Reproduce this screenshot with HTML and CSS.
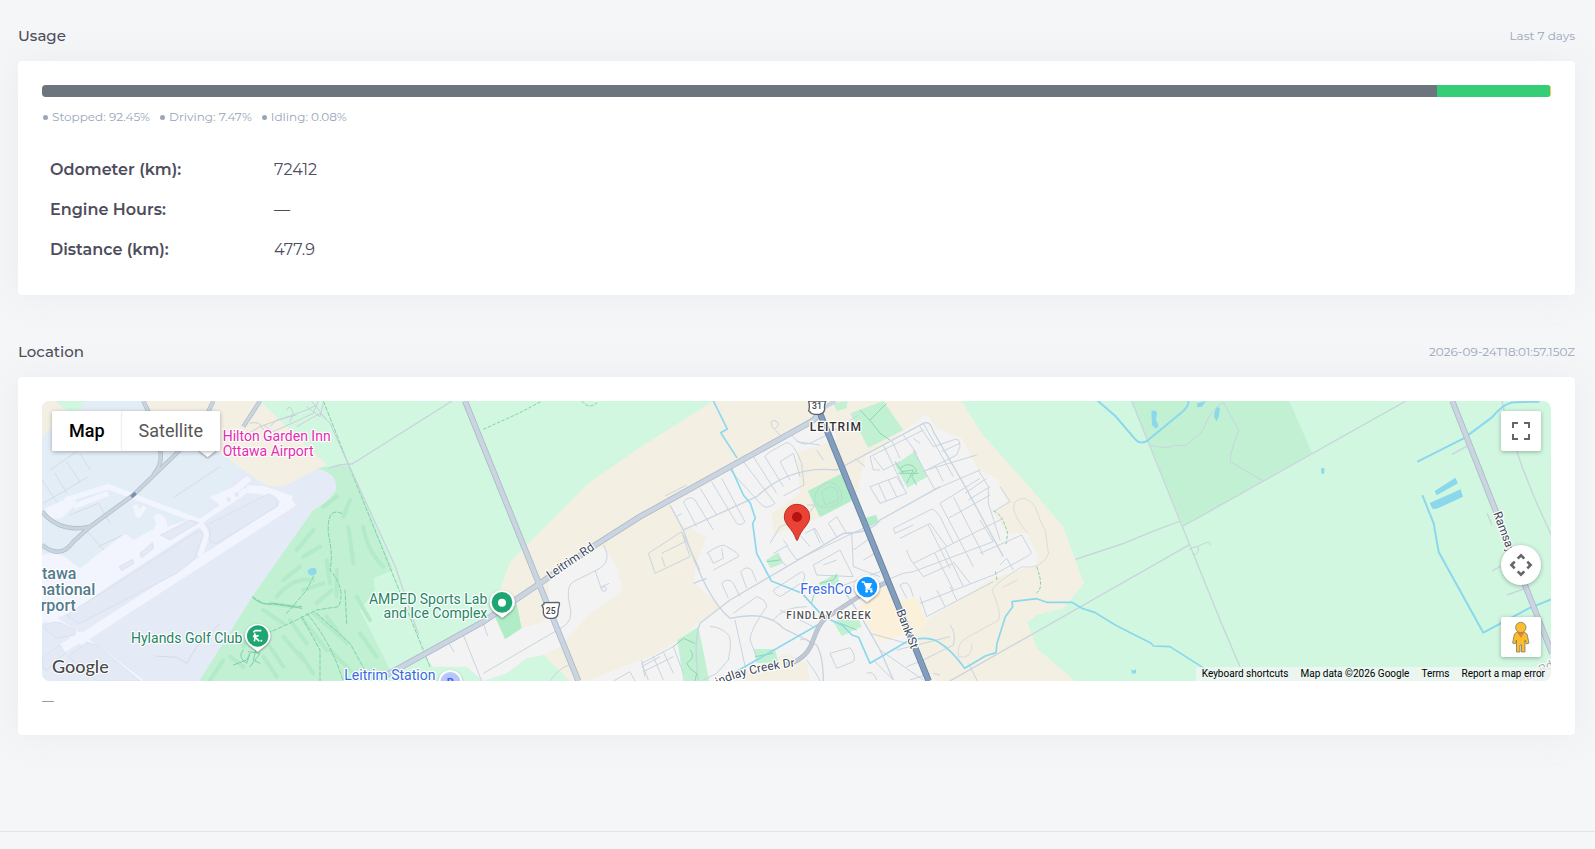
FILE: index.html
```html
<!DOCTYPE html>
<html lang="en">
<head>
<meta charset="utf-8">
<title>Vehicle usage and location</title>
<link rel="stylesheet" href="styles.css">
</head>
<body>
<main class="page">
  <section class="section">
    <header class="section-head">
      <h2 class="section-title">Usage</h2>
      <span class="section-note">Last 7 days</span>
    </header>
    <div class="card">
      <div class="usage-bar" role="img" aria-label="Usage breakdown">
        <div class="bar-stopped" style="width:92.45%"></div>
        <div class="bar-driving" style="width:7.47%"></div>
        <div class="bar-idling" style="width:0.08%"></div>
      </div>
      <ul class="legend">
        <li>Stopped: 92.45%</li>
        <li>Driving: 7.47%</li>
        <li>Idling: 0.08%</li>
      </ul>
      <table class="stats">
        <tbody>
          <tr><th scope="row">Odometer (km):</th><td>72412</td></tr>
          <tr><th scope="row">Engine Hours:</th><td>—</td></tr>
          <tr><th scope="row">Distance (km):</th><td>477.9</td></tr>
        </tbody>
      </table>
    </div>
  </section>

  <section class="section">
    <header class="section-head">
      <h2 class="section-title">Location</h2>
      <span class="section-note">2026-09-24T18:01:57.150Z</span>
    </header>
    <div class="card">
      <div class="map">
        <svg class="map-canvas" viewBox="0 33 4527 840" preserveAspectRatio="xMidYMid slice" role="img" aria-label="Map">
          <rect x="-600" y="-200" width="5800" height="1300" fill="#d1f7e1"/>

          <!-- land areas -->
          <path fill="#f3efe3" d="M1374 600L1404 515 1464 455 1639 280 1794 172 2014 33H2759L2819 130 2939 265 3064 410 3126 580 3064 655 2984 675 2956 697 2984 775 3099 873H1584L1504 795 1330 720z"/>
          <g transform="translate(-36)">
            <path fill="#e4eaf6" d="M36 33H340L380 120 570 180 690 275Q740 305 790 275L860 237Q915 230 920 290 900 340 850 360L667 620 508 873H36z"/>
            <path fill="#e3edf6" d="M36 33H340L380 120 570 180 640 240 480 400 330 520 100 590 36 500z"/>
            <path fill="#f3efe3" d="M330 33H690L890 225 860 237 790 275Q740 305 690 275L570 190 560 130 400 110zM36 33H75L120 70 36 140zM36 500L70 530 36 535z"/>
            <path fill="#d1f7e1" d="M75 33H168L130 75z"/>
            <path fill="#c1f0d3" d="M508 873L667 620 850 360Q900 335 918 300 925 250 860 235 920 225 960 228L1090 540 1030 565 1035 600 990 660 1080 840 1065 873z"/>
          </g>
          <g transform="translate(894)">
            <path fill="#f4f3f4" d="M255 800L465 680 495 745 545 715 600 700 630 680 625 570 790 470 825 520 850 600 740 680 660 770 610 795 560 805 500 850 430 873 380 830 280 830zM740 873L900 810 960 790V873z"/>
            <path fill="#b0edc7" d="M465 680L530 640 545 715 495 748z"/>
          </g>
          <g transform="translate(1794)">
            <path fill="#f4f3f4" d="M90 345L500 110 560 80 620 200 700 190 860 72 890 115 965 145 1015 240 1070 265 1102 335 1060 365 1100 430 1160 430 1195 500 1190 525 1060 565 860 690 800 760 890 873H0V820L115 750 175 700 240 650 160 575 170 520 200 440 120 400z"/>
            <path fill="#f3efe3" d="M470 190L600 145 680 190 650 310 500 300 545 380 400 435 395 370 480 310zM240 873L340 835 440 790 500 820 510 873z"/>
            <path fill="#fbf0da" d="M650 655L735 590 770 630 830 625 862 700 840 720 720 757z"/>
            <path fill="#b5edcb" d="M503 303L606 250 640 330 540 382zM674 385L708 374 716 395 688 410z"/>
            <path fill="#c1f0d3" d="M580 40L622 33 620 55 590 63zM630 70L730 33 790 120 685 173zM765 225L825 183 862 260 802 293zM378 510L415 487 430 520 392 534zM535 580L592 550 600 590 550 600zM580 695L650 670 665 710 605 738zM112 750L175 710 208 873H130zM340 777H405L415 815 350 820z"/>
          </g>
          <path fill="#c1f0d3" d="M3269 33H3742L3810 188 3424 408z"/>

          <!-- airport -->
          <g transform="translate(-36)" fill="none" stroke-linejoin="round">
            <g stroke="#d3dbe8" stroke-width="3">
              <path d="M60 240L140 185M40 340L175 260M75 250L110 310M110 215L150 275M150 190L180 240M120 375L205 340 240 400M160 410L230 490M205 470L290 430M430 323L570 230M375 798L440 802 470 820 500 770 570 700M36 270L80 335"/>
            </g>
            <path fill="#f2f4fe" d="M36 495Q80 480 110 505L150 535 285 430 310 450 370 418 378 400 370 380 385 370 408 385 412 410 455 395 500 385 525 400 250 580 120 670 36 700zM45 355L130 318 140 340 95 385 60 388zM540 322L610 290 650 258 665 270 620 310 575 350z"/>
            <g stroke="#f2f4fe">
              <path stroke-width="28" d="M160 742L790 335M36 670L150 745 330 880M36 815L160 735"/>
              <path stroke-width="16" d="M105 330L235 290 510 395 650 300M500 395Q540 425 525 450L510 500M650 292L740 318Q770 330 750 350M235 310L130 350M315 345L325 375 345 350"/>
              <path stroke-width="24" d="M655 298L700 300 785 330"/>
            </g>
            <g fill="#e3eaf5" stroke="#d5ddeb" stroke-width="2">
              <path d="M95 700Q60 690 40 712L80 745 135 735 135 720zM110 675L300 555 500 425Q522 420 518 440L490 510 440 550 145 702zM540 400L715 312Q750 320 740 350L560 460Q535 460 538 440 545 420 530 405zM330 490L368 458 370 475 335 503zM268 530L308 508 312 520 275 542zM392 435L480 390 505 398 420 450zM36 800L90 765 105 790 50 840 36 830zM115 800L170 757 200 765 330 873H200z"/>
            </g>
            <g fill="#e3eaf5"><circle cx="596" cy="329" r="7"/><circle cx="620" cy="314" r="7"/></g>
            <g stroke="#aebbc9" stroke-width="13"><path d="M340 33L360 75M550 33L525 85M690 33L640 110 M450 180L310 315 180 410 130 455Q90 510 36 465M36 365Q90 430 180 410M390 180Q400 220 370 255"/></g>
            <g stroke="#c9d4df" stroke-width="9"><path d="M340 33L360 75M550 33L525 85M690 33L640 110 M450 180L310 315 180 410 130 455Q90 510 36 465M36 365Q90 430 180 410M390 180Q400 220 370 255"/></g>
            <path stroke="#7791b1" stroke-width="10" d="M304 321L317 309"/>
            <g stroke="#c9cfda" stroke-width="3"><path d="M640 140L690 110 830 60 860 45M700 105L730 125 850 70M770 60Q780 40 790 70L780 95M800 110L870 70 900 100 958 230M830 50L870 80 880 40M660 100Q690 90 700 120M845 33L890 90M865 33L850 70M720 110L740 90 800 75"/></g>
          </g>

          <!-- golf course -->
          <g transform="translate(-36)" fill="none" stroke-linecap="round">
            <path stroke="#b3eac7" stroke-width="12" d="M880 350L920 320M800 480L850 420M820 500L870 470M760 570L810 530M740 620Q790 560 850 570M820 600L880 580M860 640L905 600M890 510L900 580M920 540V620M955 410L970 520M960 330L940 380M1000 410Q1010 480 1060 530M980 620L1020 690M700 660L760 700M720 640L790 650M780 690L830 760M820 690L890 780M850 670L930 740M890 680L950 760M760 740L820 810M720 770L760 830M650 740L640 770M600 800L640 830M540 870L580 810M700 800L740 860M810 790L850 850M900 780L980 860M990 730L1040 800"/>
            <g stroke="#7fd0aa" stroke-width="3" stroke-dasharray="12 6">
              <path d="M880 33L950 210 1200 830M935 370Q890 350 895 430 910 500 900 540 950 600 925 650L860 660 800 690 690 740M770 670L830 600 855 550M667 620L700 640 815 650M830 670Q900 750 940 873M860 670L960 760 1010 850M945 600L950 700M815 680L870 780 870 873"/>
            </g>
            <path stroke="#7fcfae" stroke-width="3" d="M670 625Q700 650 730 640L815 655M640 780Q620 800 650 820L660 790 650 810 610 825M680 770L670 810 690 820M655 785L690 790 660 830"/>
            <path fill="#8fd9ee" d="M832 545Q838 532 855 533 865 545 855 554 840 562 832 545z"/>
          </g>

          <!-- thin lines over parkland -->
          <g fill="none" stroke="#c9d4dc" stroke-width="4">
            <path d="M860 235Q890 222 930 222L1230 33M900 180L1060 530 1130 735"/>
            <path d="M3269 33L3534 690 3594 830M3424 408L4092 33M2694 890L3444 463M3100 508L3240 462 3330 425 3415 393M4380 33L4390 80 4440 230 4480 330 4530 440M4230 193L4290 160M4335 370L4350 405M4350 543L4400 515M4395 615L4450 595"/>
            <path stroke-width="3" d="M3326 165Q3380 180 3400 165L3430 168 3480 125Q3510 50 3545 38L3590 120Q3560 200 3565 215L3662 272M3440 480Q3470 460 3470 480 3465 500 3450 490M3465 470L3500 455 3506 465M2780 820L2806 873"/>
            <path stroke="#dbdcdc" stroke-width="3" d="M2957 430Q2900 360 2920 335 2950 310 2980 350 3000 410 3010 420 3020 500 3020 490 3000 540 2940 530 2860 580 2850 600 2880 670 2870 690L2780 740Q2740 760 2750 800 2790 810 2790 760M2880 593L2925 570"/>
          </g>
          <g fill="none" stroke="#84cfa7" stroke-width="3" stroke-dasharray="10 5">
            <path d="M1324 118L1430 70 1500 33M1620 33Q1640 60 1665 38M2854 363Q2880 370 2897 430L2892 463M2984 530Q3010 600 2978 612M2860 545L2866 575"/>
          </g>

          <!-- local streets, west -->
          <g transform="translate(894)" fill="none" stroke="#c8d5df" stroke-width="3">
            <path d="M790 465Q820 515 770 540L700 575Q675 590 690 650 700 690 670 710L430 850M765 540L785 600M785 590L808 580M370 735L425 873M430 700L443 738M325 755L342 787M630 873Q660 830 690 825M820 873L870 845 885 873M905 810L915 860M905 830L960 800"/>
            <circle cx="792" cy="597" r="7"/>
          </g>

          <!-- local streets, village -->
          <g transform="translate(1794)" fill="none" stroke="#c8d5df" stroke-width="3" stroke-linejoin="round">
            <path stroke-width="4" d="M90 345L130 420Q200 630 270 685 380 660 430 715L530 765Q550 800 550 873M130 420L350 320Q450 225 590 240L850 100Q870 90 880 125L970 280 1090 500M175 873Q160 750 180 700L270 630 610 430Q690 430 720 390L900 290M160 580L200 565M610 600Q660 670 720 780L760 870"/>
            <path d="M130 335Q150 315 165 330L220 420M130 335L170 410M180 295L230 375M215 275L290 400Q300 410 315 395L245 265M270 240L365 345Q380 360 405 340L310 215M340 200L410 310M375 200Q370 195 440 158 460 155 485 220L492 285 430 318M375 200L430 290M420 215L460 190 480 260M420 215L450 270M75 318L140 285M110 380L125 370"/>
            <path d="M395 105Q390 90 405 92 420 98 412 110 400 125 395 105zM405 120L425 140M455 135Q480 170 510 160L570 130 655 75M470 155L540 165M530 180L550 210M645 205L675 230"/>
            <path d="M25 490L45 550 150 500 125 425 25 490M65 500L75 530M65 490L135 455M200 490Q250 455 260 470 300 490 295 500L220 540M205 490L220 520 250 505 245 475M130 435L180 540M245 580Q265 560 280 580L300 620M245 580L265 625M302 545Q320 525 335 540L350 575M302 545L320 595"/>
            <path d="M400 490L440 468 470 510M415 500L440 530M470 510L700 400M480 435L510 470M495 430L525 415 550 460M520 415L540 460M565 400L590 380 620 430M565 400L590 440M430 450L445 470M390 460L420 410 500 380 525 345 500 345"/>
            <path d="M400 600L485 545Q500 550 490 575L420 620Q400 610 400 600zM520 525L600 480 640 560 530 555 520 525M550 525L590 510M635 430L640 530 720 560M640 480L690 445M670 510L705 490M600 590L720 545M280 670L350 620Q380 630 380 650 330 720 330 750L350 800M190 870L230 850 265 810Q280 740 260 730 240 710 210 710M285 690L320 850M400 690Q430 650 500 650M420 660L520 710"/>
            <path d="M5 820L100 770 130 850M5 820L25 870M40 800L70 870M70 785L100 850M10 845L100 800M500 810Q530 850 540 873M570 790L630 773Q650 800 640 815L590 835zM480 750Q500 740 510 760M700 810L760 870M680 850Q700 840 710 870M690 730L800 760M720 780L850 870M780 585Q800 570 810 590L820 620M780 585L800 625"/>
            <path d="M690 200L850 120M700 200L730 240 780 215M690 200L700 240 720 240M730 165L790 290M790 135L830 190M755 150L780 205M820 145L840 160M690 290L770 260 800 310 720 340 690 290M715 280L740 335M745 270L770 320M820 180L885 300M850 100L940 260M840 110L880 170 940 150Q960 140 960 170L950 195 850 245M905 185L960 160M860 240L1010 195M885 225L910 275M880 300L1020 240M975 310L1040 265M985 330L1050 290"/>
            <path d="M900 340L1000 530M940 320L1030 495M900 340L1020 265M925 385L1050 315M760 415L870 360Q880 350 900 380L940 460M760 415L765 430 820 405M800 480Q810 510 820 520L1090 385M820 520L850 560 940 520M740 570L790 550 820 545 1060 455M885 490L940 600M915 475L970 590M865 405L930 535M940 515L990 580M840 640L1060 555 1160 500Q1180 490 1170 480L1145 435 1020 490M860 680L1060 575M1080 525L1100 505 1120 540M1020 390L1060 455M1080 290L1110 335 1060 365M1015 240L1045 290V340L1080 450M840 620L860 680M890 600L915 650M930 590L950 630M780 445L870 400 920 470"/>
            <path d="M770 780L930 740M800 830L850 810M810 870L870 850M850 810L940 765Q950 730 930 705M880 850L900 855"/>
          </g>
          <g transform="translate(1794)" fill="none" stroke="#8fd6b0" stroke-width="3">
            <path d="M780 235Q810 210 830 240L815 260 830 285M785 245L820 240 800 280M775 250L835 250M765 215L790 250M660 60Q700 100 720 130L750 150M690 90L740 40M100 770L130 745 165 760M150 780Q170 800 140 820 150 840 170 850L165 873M600 700L650 720M345 800L400 790M380 515L420 510M540 580L580 570 590 555M515 640Q520 600 550 590"/>
            <g stroke="#b4dccb"><path d="M525 320Q530 285 570 275 610 290 605 330 580 360 540 350 520 340 525 320zM545 305Q570 280 590 300L595 330 555 345z"/></g>
          </g>

          <!-- water -->
          <g fill="none" stroke="#8bd8ed" stroke-width="6" stroke-linejoin="round" stroke-linecap="round">
            <path stroke-width="5" d="M2014 33L2056 117 2036 128 2084 202M2068 235L2104 315 2125 340 2140 385 2132 400 2144 490 2188 573 2280 610 2344 680 2400 705 2430 735 2450 742 2484 820 2594 755Q2650 735 2688 755 2730 780 2768 835L2830 798 2862 788 2865 760 2890 680 2912 650 2910 635 2984 626 3014 637H3090L3120 655 3160 668 3220 705 3265 728 3325 758 3335 768 3384 770 3510 850M2074 850L2344 695"/>
            <path d="M3168 33L3220 78 3280 148Q3294 164 3315 153L3425 62Q3438 50 3440 33M4128 214L4265 145 4350 82Q4390 35 4420 37L4490 35M4142 318L4175 400 4190 486 4324 728 4460 655 4527 628"/>
          </g>
          <g fill="#8bd8ed"><path d="M3328 65Q3340 55 3345 70L3342 90 3350 108 3342 116 3330 105zM3465 40L3492 33 3480 50 3466 52zM3518 65Q3526 45 3534 55L3530 80 3524 94 3516 80zM3837 235H3848L3846 252 3838 250zM4178 303L4240 263 4248 280 4184 316zM4163 339L4256 298 4263 320 4190 354Q4175 360 4170 355zM3268 838L3274 842 3282 838 3282 850 3270 851z"/></g>

          <!-- main roads -->
          <g fill="none">
            <g stroke="#adbac8"><path stroke-width="18" d="M1034 855L1324 695 1494 580 1660 465 1794 380 2290 105Q2330 85 2334 60M1269 33L1609 873M4231 33L4530 790"/><path stroke-width="14" d="M2230 825Q2290 810 2310 760 2330 700 2350 685L2450 620 2536 575"/></g>
            <g stroke="#cbd5e1"><path stroke-width="13" d="M1034 855L1324 695 1494 580 1660 465 1794 380 2290 105Q2330 85 2334 60L2380 33M1269 33L1609 873M4231 33L4530 790"/><path stroke="#c0c8d4" stroke-width="10" d="M2230 825Q2290 810 2310 760 2330 700 2350 685L2450 620 2536 575"/></g>
            <path stroke="#66809f" stroke-width="19" d="M2330 60L2660 873"/>
            <path stroke="#829dbd" stroke-width="14" d="M2330 60L2660 873"/>
          </g>

          <!-- route shields -->
          <g fill="#fff" stroke="#59616b" stroke-width="4">
            <path d="M1506 642Q1504 637 1512 638L1548 637Q1554 637 1552 644 1548 656 1548 670 1546 684 1532 685H1520Q1506 683 1504 668 1506 654 1500 646z"/>
            <path d="M2300 33Q2304 52 2300 62 2306 72 2318 73H2332Q2346 70 2348 58 2346 46 2351 33z"/>
          </g>
          <g class="shield-text"><text x="1526" y="671">25</text><text x="2325" y="58">31</text></g>

          <!-- place pins -->
          <g fill="#fff" class="poi-shadow">
            <path d="M647 702A36 36 0 0 1 672 766L647 785 622 766A36 36 0 0 1 647 702z"/>
            <path d="M1380 601A36 36 0 0 1 1405 665L1381 684 1356 665A36 36 0 0 1 1380 601z"/>
            <path d="M2475 555A36 36 0 0 1 2500 618L2475 637 2450 618A36 36 0 0 1 2475 555z"/>
            <path d="M496 135A36 36 0 0 1 520 184L497 202 473 184A36 36 0 0 1 496 135z"/>
            <circle cx="1225" cy="876" r="36"/>
          </g>
          <circle cx="497" cy="155" r="22" fill="#ef62bd"/>
          <circle cx="647" cy="738" r="32" fill="#1ea672"/>
          <g fill="none" stroke="#fff" stroke-width="5"><path d="M634 727L640 722H658M640 730L636 739 650 737M640 738L637 754M641 743L652 754"/></g><circle cx="658" cy="752" r="3" fill="#fff"/>
          <circle cx="1380" cy="637" r="31" fill="#1ea672"/><circle cx="1380" cy="638" r="12" fill="#fff"/>
          <circle cx="2475" cy="591" r="31" fill="#1396ff"/>
          <path fill="none" stroke="#fff" stroke-width="4" d="M2459 576H2466L2475 597H2491M2475 597H2470"/><path fill="#fff" d="M2467 579H2490L2484 594H2474z"/><circle cx="2474" cy="604" r="4" fill="#fff"/><circle cx="2488" cy="604" r="4" fill="#fff"/>
          <circle cx="1225" cy="876" r="30" fill="#b4c8fb"/>
          <text x="1214" y="887" class="transit-mark">P</text>

          <!-- labels -->
          <g class="label">
            <g class="pink"><text x="542" y="154">Hilton Garden Inn</text><text x="542" y="197">Ottawa Airport</text></g>
            <g class="teal"><text x="0" y="566">tawa</text><text x="-13" y="614">national</text><text x="-4" y="662">rport</text></g>
            <g class="green"><text x="267" y="760">Hylands Golf Club</text><text x="1336" y="641" text-anchor="end">AMPED Sports Lab</text><text x="1336" y="683" text-anchor="end">and Ice Complex</text></g>
            <g class="blue"><text x="907" y="871">Leitrim Station</text><text x="2275" y="613">FreshCo</text></g>
            <text class="town" x="2303" y="124">LEITRIM</text>
            <text class="hamlet" x="2233" y="688">FINDLAY CREEK</text>
            <g class="road">
              <text transform="translate(1524 568) rotate(-34)">Leitrim Rd</text>
              <text transform="translate(2563 664) rotate(69)">Bank St</text>
              <text transform="translate(4354 370) rotate(70)">Ramsay</text>
              <path id="creek-drive" d="M2028 888Q2110 845 2290 826" fill="none" stroke="none"/>
              <text><textPath href="#creek-drive">indlay Creek Dr</textPath></text>
              <text class="faded" transform="translate(4438 882) rotate(-27)">eau Rd</text>
            </g>
          </g>

          <!-- vehicle marker -->
          <path fill="#ea4335" stroke="#b93126" stroke-width="3" d="M2265 343C2242 343 2227 361 2227 381 2227 405 2252 415 2262 447Q2265 456 2268 447C2278 415 2303 405 2303 381 2303 361 2288 343 2265 343z"/>
          <circle cx="2265" cy="381" r="15" fill="#b31412"/>
          <text class="logo" x="30" y="850">Google</text>
        </svg>

        <div class="map-type">
          <button type="button" class="type-button active">Map</button>
          <button type="button" class="type-button">Satellite</button>
        </div>
        <button type="button" class="map-control fullscreen" aria-label="Toggle fullscreen view">
          <svg width="18" height="18" viewBox="0 0 18 18" fill="none" stroke="#666" stroke-width="2"><path d="M1 6V1H6M12 1H17V6M17 12V17H12M6 17H1V12"/></svg>
        </button>
        <div class="side-controls">
          <button type="button" class="map-control camera" aria-label="Map camera controls">
            <svg width="24" height="24" viewBox="0 0 24 24" fill="none" stroke="#666" stroke-width="2.600"><path d="M8.700 5.700L12 2.400 15.300 5.700M8.700 18.300L12 21.600 15.300 18.300M5.700 8.700L2.400 12 5.700 15.300M18.300 8.700L21.600 12 18.300 15.300"/></svg>
          </button>
          <button type="button" class="map-control" aria-label="Drag Pegman onto the map to open Street View">
            <svg width="18" height="32" viewBox="0 0 18 32" fill="#fbbc2d" stroke="#7d7a63" stroke-width=".8"><path d="M5 11H12L15 13 17 22 14.500 23 13 19V31H9.500V24H8V31H4.500V19L3 23 .600 22 2.500 13z"/><path d="M5.500 12H12L9 17z" fill="#e8823a" stroke="none"/><circle cx="8.800" cy="6.500" r="5.200"/></svg>
          </button>
        </div>
        <div class="attribution">
          <button type="button" class="credit">Keyboard shortcuts</button>
          <span class="credit">Map data ©2026 Google</span>
          <a class="credit" href="#terms">Terms</a>
          <a class="credit" href="#report">Report a map error</a>
        </div>
      </div>
      <p class="address">—</p>
    </div>
  </section>
</main>
<footer class="footer"></footer>
</body>
</html>
```
FILE: styles.css
```css
* { box-sizing: border-box; }
body {
  margin: 0;
  background: #f5f6f8;
  color: #4d4d5c;
  font-family: Montserrat, Inter, "Liberation Sans", sans-serif;
  font-size: 16px;
  line-height: 24px;
  overflow: hidden;
}
.page { padding: 24px 20px 0 18px; }
.section + .section { margin-top: 45px; }
.section-head {
  display: flex;
  justify-content: space-between;
  align-items: center;
  margin-bottom: 13px;
}
.section-title { margin: 0; font-size: 15px; font-weight: 500; }
.section-note { color: #98a6ba; font-size: 12px; line-height: 22px; }
.card {
  padding: 24px;
  background: #fff;
  border-radius: 4px;
  box-shadow: 0 0 35px rgba(154, 161, 171, .12);
}
.usage-bar {
  display: flex;
  height: 12px;
  border-radius: 4px;
  overflow: hidden;
  background: #ffc35a;
}
.bar-stopped { background: #6c757d; }
.bar-driving { background: #35ce76; }
.bar-idling { background: #ffc35a; }
.legend {
  display: flex;
  gap: 9px;
  margin: 8px 0 21px;
  padding: 0;
  list-style: none;
  color: #98a6ba;
  font-size: 12px;
}
.legend li { display: flex; align-items: center; gap: 4px; }
.legend li::before {
  content: "";
  width: 5px;
  height: 5px;
  margin-left: 1px;
  border-radius: 50%;
  background: #98a6ba;
}
.stats { width: 100%; margin-bottom: 25px; border-collapse: collapse; }
.stats:last-child { margin-bottom: 1px; }
.stats th, .stats td { padding: 8px; text-align: left; }
.stats th { width: 224px; font-weight: 600; }
.stats td { font-weight: 400; }

.map {
  position: relative;
  height: 280px;
  border-radius: 8px;
  overflow: hidden;
  font-family: Roboto, sans-serif;
}
.map-canvas { display: block; width: 100%; height: 100%; }
.map button { margin: 0; border: 0; font-family: inherit; cursor: pointer; }
.map-type {
  position: absolute;
  top: 10px;
  left: 10px;
  display: flex;
  background: #fff;
  border-radius: 2px;
  box-shadow: 0 1px 4px rgba(0, 0, 0, .3);
}
.map-type .type-button {
  height: 40px;
  padding: 0 17px 2px;
  background: #fff;
  color: #565656;
  font-size: 18px;
  border-radius: 2px;
}
.map-type .type-button + .type-button { box-shadow: -1px 0 1px rgba(0, 0, 0, .08); }
.map-type .active { color: #000; font-weight: 500; }
.map-control {
  display: flex;
  align-items: center;
  justify-content: center;
  width: 40px;
  height: 40px;
  padding: 0;
  background: #fff;
  border-radius: 2px;
  box-shadow: 0 1px 4px rgba(0, 0, 0, .3);
}
.fullscreen { position: absolute; top: 10px; right: 10px; }
.side-controls {
  position: absolute;
  right: 10px;
  bottom: 24px;
  display: flex;
  flex-direction: column;
  gap: 32px;
}
.camera { border-radius: 50%; }
.attribution {
  position: absolute;
  right: 0;
  bottom: 0;
  display: flex;
}
.attribution .credit {
  height: 14px;
  padding: 0 6px;
  background: rgba(245, 245, 245, .7);
  color: #000;
  font-size: 10px;
  line-height: 14px;
  text-decoration: none;
}

.label text { paint-order: stroke; stroke: #fff; stroke-width: 7px; stroke-linejoin: round; font-size: 42px; }
.label .pink { fill: #e52bb0; }
.label .teal { fill: #547b8b; }
.label .teal text { font-size: 48px; font-weight: 500; }
.label .green { fill: #258564; }
.label .blue { fill: #3a6be0; }
.label .town { fill: #333; font-size: 36px; font-weight: 500; letter-spacing: 3px; }
.label .hamlet { fill: #555; font-size: 30px; font-weight: 500; letter-spacing: 3px; }
.label .road text { fill: #3c4858; font-size: 36px; }
.label .road .faded { fill: #a5b0ac; }
.shield-text { fill: #444; font-size: 26px; font-weight: 500; text-anchor: middle; }
.transit-mark { fill: #4a5af5; font-size: 32px; font-weight: 700; }
.poi-shadow { filter: drop-shadow(0 3px 3px rgba(0, 0, 0, .4)); }
.logo {
  fill: #4a4a4a;
  stroke: #fff;
  stroke-width: 6px;
  paint-order: stroke;
  font-family: Lato, sans-serif;
  font-size: 54px;
  font-weight: 500;
}
.address { margin: 9px 0 0; font-size: 12px; line-height: 21px; }
.footer { margin-top: 96px; border-top: 1px solid #e2e4e8; }
```
